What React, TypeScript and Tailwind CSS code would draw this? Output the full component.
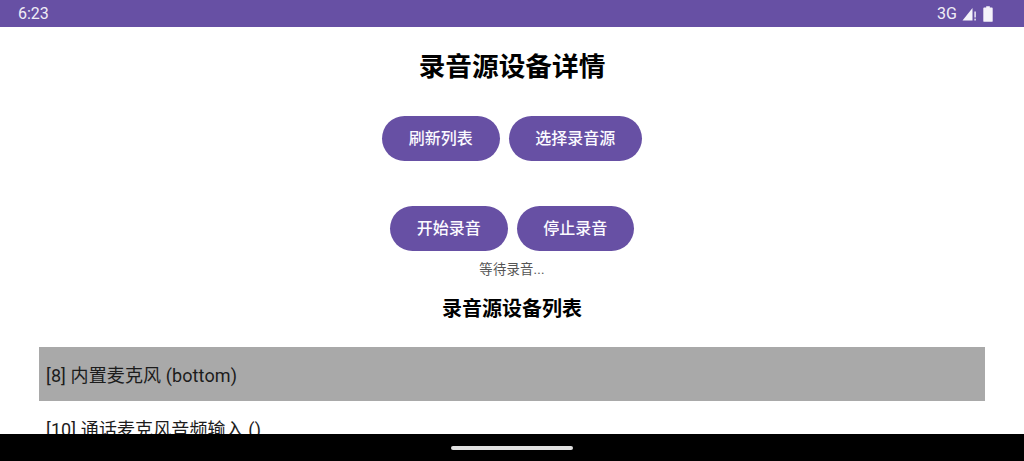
const font = { fontFamily: '"Roboto", "Noto Sans CJK SC", sans-serif' };

function Pill({ label }: { label: string }) {
  return (
    <button className="h-[45px] px-[26.67px] rounded-full bg-[#6750a4] text-[#fbfaff] text-[16px] font-medium leading-[45px] whitespace-nowrap">
      {label}
    </button>
  );
}

function StatusIcons() {
  return (
    <div className="flex items-center">
      <span className="text-[16px] leading-none text-[#f0edf6]">3G</span>
      <svg width="15" height="16" viewBox="0 0 15 16" className="ml-[5px]">
        <path d="M0.5 14.5 L10.5 2 V14.5 Z" fill="#f5f3fa" />
        <rect x="12.4" y="5.5" width="1.4" height="6" fill="#f5f3fa" />
        <rect x="12.4" y="12.6" width="1.4" height="1.9" fill="#f5f3fa" />
      </svg>
      <svg width="10" height="16" viewBox="0 0 10 16" className="ml-[6px]">
        <path d="M3.2 1.5 V0.3 H6.8 V1.5 H8.8 a0.9 0.9 0 0 1 0.9 0.9 V14.9 a0.9 0.9 0 0 1 -0.9 0.9 H1.2 a0.9 0.9 0 0 1 -0.9 -0.9 V2.4 a0.9 0.9 0 0 1 0.9 -0.9 Z" fill="#f5f3fa" />
      </svg>
    </div>
  );
}

export default function App() {
  return (
    <div className="w-[1024px] h-[461px] flex flex-col overflow-hidden bg-white" style={font}>
      <div className="h-[27px] shrink-0 bg-[#6750a4] flex items-center justify-between pl-[18px] pr-[31px]">
        <span className="text-[16px] leading-none text-[#f0edf6]">6:23</span>
        <StatusIcons />
      </div>
      <div className="h-[407px] shrink-0 overflow-hidden flex flex-col items-center">
        <h1 className="mt-[22px] h-[36px] text-[26.67px] leading-[36px] font-bold text-black">录音源设备详情</h1>
        <div className="mt-[31px] flex gap-[9px]">
          <Pill label="刷新列表" />
          <Pill label="选择录音源" />
        </div>
        <div className="mt-[45px] flex gap-[9px]">
          <Pill label="开始录音" />
          <Pill label="停止录音" />
        </div>
        <p className="mt-[10px] h-[18px] text-[13.33px] leading-[18px] text-[#555555] tracking-[0.2px]">等待录音...</p>
        <h2 className="mt-[17px] h-[27px] text-[20px] leading-[27px] font-bold text-black">录音源设备列表</h2>
        <ul className="mt-[24px] w-[946px] text-[18px] font-normal tracking-[0.11px] text-[#1c1c1c]">
          <li className="h-[54px] bg-[#a9a9a9] pl-[7px] pt-[2px] flex items-center">[8] 内置麦克风 (bottom)</li>
          <li className="h-[54px] pl-[7px] pt-[2px] flex items-center">[10] 通话麦克风音频输入 ()</li>
        </ul>
      </div>
      <div className="h-[27px] shrink-0 bg-black flex items-center justify-center">
        <div className="w-[122px] h-[4px] rounded-full bg-[#e0e0e0]" />
      </div>
    </div>
  );
}
